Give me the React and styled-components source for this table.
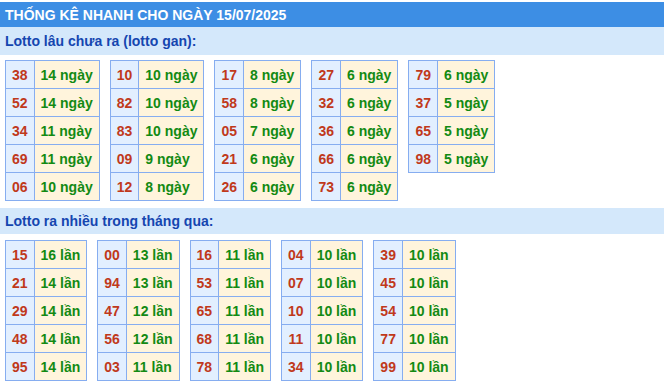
import React from 'react';
import styled, { createGlobalStyle } from 'styled-components';

const gan = [
  [['38', 14], ['52', 14], ['34', 11], ['69', 11], ['06', 10]],
  [['10', 10], ['82', 10], ['83', 10], ['09', 9], ['12', 8]],
  [['17', 8], ['58', 8], ['05', 7], ['21', 6], ['26', 6]],
  [['27', 6], ['32', 6], ['36', 6], ['66', 6], ['73', 6]],
  [['79', 6], ['37', 5], ['65', 5], ['98', 5]],
];

const nhieu = [
  [['15', 16], ['21', 14], ['29', 14], ['48', 14], ['95', 14]],
  [['00', 13], ['94', 13], ['47', 12], ['56', 12], ['03', 11]],
  [['16', 11], ['53', 11], ['65', 11], ['68', 11], ['78', 11]],
  [['04', 10], ['07', 10], ['10', 10], ['11', 10], ['34', 10]],
  [['39', 10], ['45', 10], ['54', 10], ['77', 10], ['99', 10]],
];

export default function App() {
  return (
    <>
      <GlobalStyle />
      <Page>
        <Header>THỐNG KÊ NHANH CHO NGÀY 15/07/2025</Header>
        <SectionTitle $height={28}>Lotto lâu chưa ra (lotto gan):</SectionTitle>
        <Tables $top={5} $bottom={7}>
          {gan.map((group, i) => (
            <StatTable key={i}>
              {group.map(([num, count]) => (
                <React.Fragment key={num}>
                  <NumCell>{num}</NumCell>
                  <ValueCell>{count} ngày</ValueCell>
                </React.Fragment>
              ))}
            </StatTable>
          ))}
        </Tables>
        <SectionTitle $height={26}>Lotto ra nhiều trong tháng qua:</SectionTitle>
        <Tables $top={6} $bottom={0}>
          {nhieu.map((group, i) => (
            <StatTable key={i}>
              {group.map(([num, count]) => (
                <React.Fragment key={num}>
                  <NumCell>{num}</NumCell>
                  <ValueCell>{count} lần</ValueCell>
                </React.Fragment>
              ))}
            </StatTable>
          ))}
        </Tables>
      </Page>
    </>
  );
}

const GlobalStyle = createGlobalStyle`
  body {
    margin: 0;
    background: #ffffff;
    font-family: "Liberation Sans", Arial, sans-serif;
  }
`;

const Page = styled.div`
  width: 664px;
  padding-top: 2px;
`;

const Header = styled.div`
  height: 25px;
  line-height: 26px;
  padding-left: 5px;
  background: #3d8ee4;
  color: #ffffff;
  font-size: 14px;
  font-weight: bold;
`;

const SectionTitle = styled.div`
  height: ${p => p.$height}px;
  line-height: ${p => p.$height}px;
  padding-left: 5px;
  background: #d4e8fb;
  color: #1546b0;
  font-size: 14px;
  font-weight: bold;
`;

const Tables = styled.div`
  display: flex;
  align-items: flex-start;
  gap: 10px;
  padding-left: 5px;
  margin-top: ${p => p.$top}px;
  margin-bottom: ${p => p.$bottom}px;
`;

const StatTable = styled.div`
  display: grid;
  grid-template-columns: auto auto;
  border-top: 1px solid #86adf0;
  border-left: 1px solid #86adf0;
`;

const Cell = styled.div`
  height: 27px;
  line-height: 28px;
  padding: 0 6px;
  font-size: 14px;
  font-weight: bold;
  white-space: nowrap;
  border-right: 1px solid #86adf0;
  border-bottom: 1px solid #86adf0;
`;

const NumCell = styled(Cell)`
  text-align: center;
  background: #e2efff;
  color: #c0391b;
`;

const ValueCell = styled(Cell)`
  text-align: left;
  background: #fff4dc;
  color: #138a13;
`;
